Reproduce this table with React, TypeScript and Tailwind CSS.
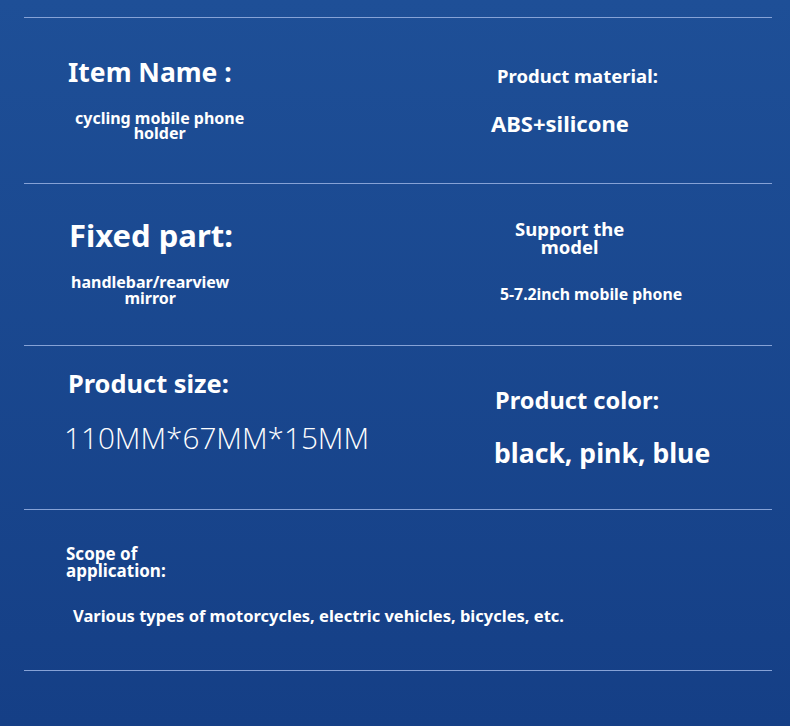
import React from "react";

const font = { fontFamily: '"Noto Sans", "Open Sans", sans-serif' };

export default function App() {
  return (
    <div
      className="w-[790px] h-[726px] bg-gradient-to-b from-[#1e4f97] to-[#153f86] pt-[17px] pl-[24px] pr-[18px] text-white font-bold"
      style={font}
    >
      {/* Row 1 */}
      <div className="h-[166px] border-t border-[#86a2d6] flex">
        <div className="w-[440px] pl-[44px] flex flex-col items-start">
          <div className="mt-[41px] text-[26.5px] leading-none">Item Name :</div>
          <div className="mt-[25px] ml-[7px] text-center text-[16px] leading-[15px]">
            cycling mobile phone
            <br />
            holder
          </div>
        </div>
        <div className="flex-1 flex flex-col items-start">
          <div className="mt-[49px] ml-[33px] text-[18.5px] leading-none">Product material:</div>
          <div className="mt-[26px] ml-[27px] text-[22px] leading-none">ABS+silicone</div>
        </div>
      </div>

      {/* Row 2 */}
      <div className="h-[162px] border-t border-[#86a2d6] flex">
        <div className="w-[440px] pl-[45px] flex flex-col items-start">
          <div className="mt-[36px] text-[31px] leading-none">Fixed part:</div>
          <div className="mt-[23px] ml-[2px] text-center text-[16px] leading-[16px]">
            handlebar/rearview
            <br />
            mirror
          </div>
        </div>
        <div className="flex-1 flex flex-col items-start">
          <div className="mt-[36px] ml-[51px] text-center text-[18.5px] leading-[18px]">
            Support the
            <br />
            model
          </div>
          <div className="mt-[31px] ml-[36px] text-[15.8px] leading-none">5-7.2inch mobile phone</div>
        </div>
      </div>

      {/* Row 3 */}
      <div className="h-[164px] border-t border-[#86a2d6] flex">
        <div className="w-[440px] pl-[44px] flex flex-col items-start">
          <div className="mt-[25px] text-[25.4px] leading-none">Product size:</div>
          <div
            className="mt-[27px] -ml-[4px] text-[29.7px] leading-none font-light"
            style={{ fontFamily: '"Open Sans", "Noto Sans", sans-serif' }}
          >
            110MM*67MM*15MM
          </div>
        </div>
        <div className="flex-1 flex flex-col items-start">
          <div className="mt-[43px] ml-[31px] text-[23.6px] leading-none">Product color:</div>
          <div className="mt-[27px] ml-[30px] text-[26.6px] leading-none">black, pink, blue</div>
        </div>
      </div>

      {/* Row 4 */}
      <div className="h-[161px] border-t border-[#86a2d6] flex flex-col items-start pl-[42px]">
        <div className="mt-[35px] text-[17px] leading-[17px]">
          Scope of
          <br />
          application:
        </div>
        <div className="mt-[29px] ml-[7px] text-[16.5px] leading-none">
          Various types of motorcycles, electric vehicles, bicycles, etc.
        </div>
      </div>

      <div className="border-t border-[#86a2d6]" />
    </div>
  );
}
